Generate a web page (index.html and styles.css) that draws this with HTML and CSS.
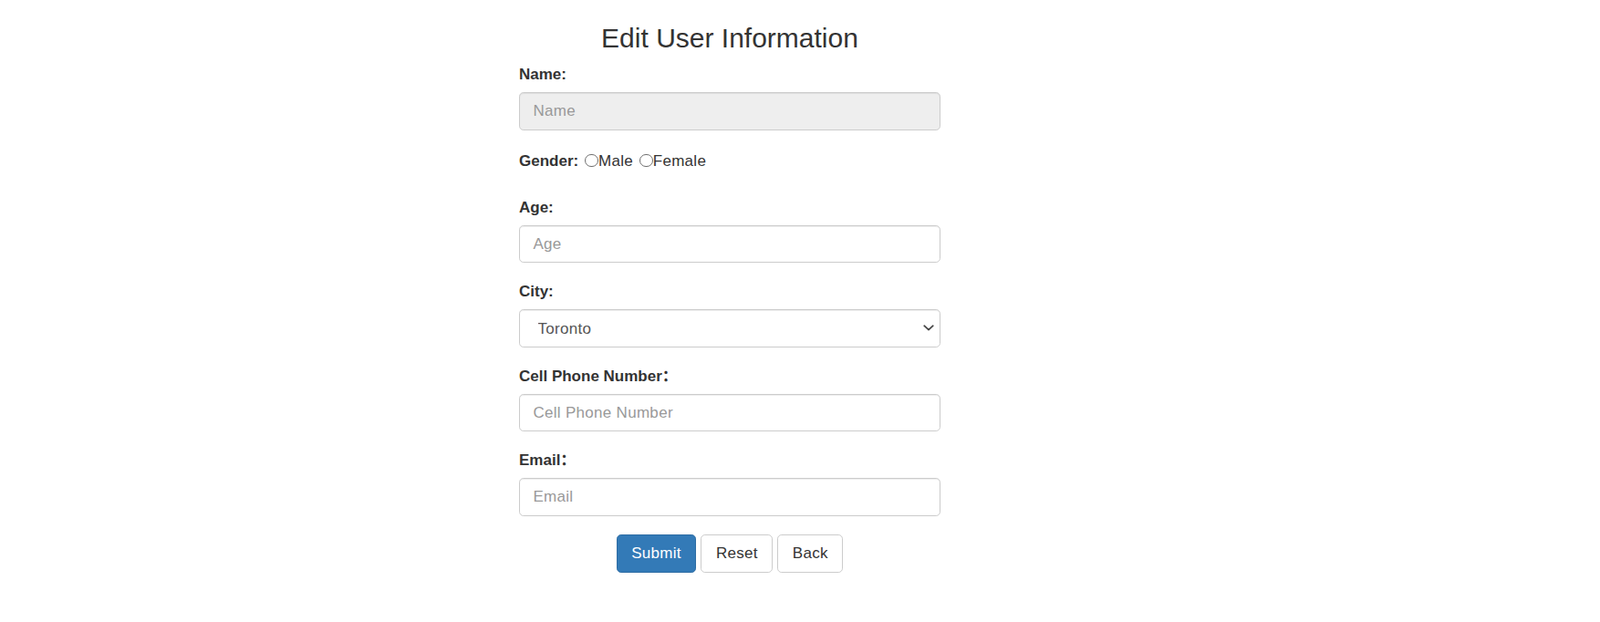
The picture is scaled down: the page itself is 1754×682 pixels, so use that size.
FILE: index.html
```html
<!DOCTYPE html>
<html lang="en">
<head>
<meta charset="utf-8">
<title>Edit User Information</title>
<link rel="stylesheet" href="styles.css">
</head>
<body>
<div class="page">
  <form class="form">
    <h3 class="title">Edit User Information</h3>
    <div class="group">
      <label class="lbl">Name:</label>
      <input class="ctl" type="text" placeholder="Name" disabled>
    </div>
    <div class="gender">
      <label class="lbl-inline">Gender:</label> <input type="radio" name="gender" class="radio"><span class="opt">Male</span> <input type="radio" name="gender" class="radio"><span class="opt">Female</span>
    </div>
    <div class="group">
      <label class="lbl">Age:</label>
      <input class="ctl" type="text" placeholder="Age">
    </div>
    <div class="group">
      <label class="lbl">City:</label>
      <div class="select-wrap">
        <select class="ctl sel">
          <option>Toronto</option>
          <option>Vancouver</option>
          <option>Montreal</option>
        </select>
        <svg class="chev" viewBox="0 0 12 7" width="12" height="7"><path d="M1.2 1.2 L6 5.6 L10.8 1.2" fill="none" stroke="#444" stroke-width="1.7" stroke-linecap="round" stroke-linejoin="round"/></svg>
      </div>
    </div>
    <div class="group">
      <label class="lbl">Cell Phone Number：</label>
      <input class="ctl" type="text" placeholder="Cell Phone Number">
    </div>
    <div class="group">
      <label class="lbl">Email：</label>
      <input class="ctl" type="text" placeholder="Email">
    </div>
    <div class="actions">
      <button type="button" class="btn btn-primary">Submit</button>
      <button type="button" class="btn">Reset</button>
      <button type="button" class="btn">Back</button>
    </div>
  </form>
</div>
</body>
</html>
```

FILE: styles.css
```css
* { box-sizing: border-box; }

body {
  margin: 0;
  background: #fff;
  color: #333;
  font-family: "Liberation Sans", Arial, "Noto Sans CJK SC", sans-serif;
  font-size: 17px;
  line-height: 24px;
}

.form {
  width: 462px;
  margin-left: 569px;
}

.title {
  margin: 24.6px 0 12.9px;
  font-size: 30px;
  font-weight: normal;
  line-height: 33px;
  text-align: center;
  color: #333;
}

.group {
  display: flex;
  flex-direction: column;
  margin-bottom: 20px;
}

.lbl {
  font-weight: bold;
  line-height: 24px;
  margin-bottom: 7px;
}

.lbl-inline {
  font-weight: bold;
}

.gender {
  height: 33px;
  line-height: 27.5px;
  margin-bottom: 20px;
}

.opt {
  letter-spacing: 0.3px;
}

.radio {
  appearance: none;
  -webkit-appearance: none;
  display: inline-block;
  width: 14.5px;
  height: 14.5px;
  margin: 0 0 0 2.5px;
  border: 1px solid #6f6f6f;
  border-radius: 50%;
  background: #fff;
  vertical-align: -1.3px;
}

.ctl {
  display: block;
  width: 100%;
  height: 41.5px;
  padding: 0 14.4px;
  font-family: inherit;
  font-size: 17px;
  letter-spacing: 0.3px;
  color: #555;
  background: #fff;
  border: 1px solid #ccc;
  border-radius: 4.8px;
  box-shadow: inset 0 1px 1px rgba(0, 0, 0, 0.075);
  outline: none;
}

.ctl::placeholder {
  color: #999;
  opacity: 1;
}

.ctl:disabled {
  background: #eee;
}

.select-wrap {
  position: relative;
}

.sel {
  appearance: none;
  -webkit-appearance: none;
  padding-left: 19.5px;
  color: #555;
}

.chev {
  position: absolute;
  right: 7px;
  top: 17px;
  pointer-events: none;
}

.actions {
  display: flex;
  justify-content: center;
  gap: 5px;
}

.btn {
  padding: 8px 15.5px;
  font-family: inherit;
  font-size: 17px;
  letter-spacing: 0.3px;
  line-height: 24px;
  color: #333;
  background: #fff;
  border: 1px solid #ccc;
  border-radius: 4.8px;
}

.btn-primary {
  color: #fff;
  background: #337ab7;
  border-color: #2e6da4;
}
```
